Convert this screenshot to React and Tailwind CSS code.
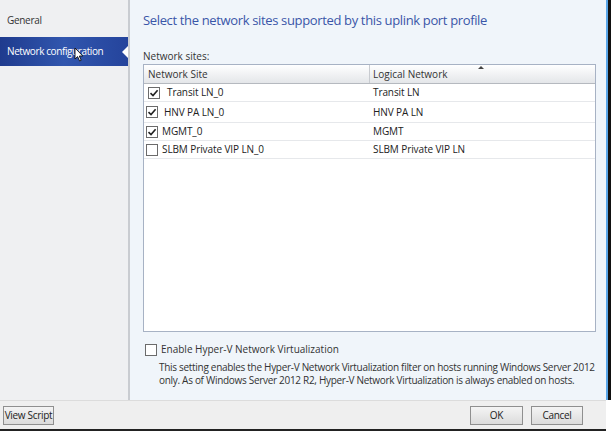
import React from 'react';

const rows = [
  { site: 'Transit LN_0', net: 'Transit LN', checked: true, pad: 'pl-[4px]', gap: 'gap-[7px]' },
  { site: 'HNV PA LN_0', net: 'HNV PA LN', checked: true, pad: 'pl-[2px]', gap: 'gap-[6px]' },
  { site: 'MGMT_0', net: 'MGMT', checked: true, pad: 'pl-[2px]', gap: 'gap-[4px]' },
  { site: 'SLBM Private VIP LN_0', net: 'SLBM Private VIP LN', checked: false, pad: 'pl-[2px]', gap: 'gap-[4px]' },
];

const Checkbox = ({ checked }) => (
  <span className="w-[12px] h-[12px] border border-[#6b6b6b] bg-white flex items-center justify-center shrink-0">
    {checked && (
      <svg width="10" height="10" viewBox="0 0 10 10">
        <path d="M1.5 5.2 L4 7.6 L8.6 2.2" fill="none" stroke="#222" strokeWidth="1.6" />
      </svg>
    )}
  </span>
);

const Button = ({ children, className = '' }) => (
  <button className={`h-[19px] border border-[#8f8f8f] bg-gradient-to-b from-[#f4f4f4] to-[#dcdcdc] text-[10px] tracking-[-0.3px] whitespace-nowrap text-[#222] ${className}`}>
    {children}
  </button>
);

export default function App() {
  return (
    <div className="w-[611px] h-[437px] bg-white text-[#222] font-['Open_Sans','Noto_Sans',sans-serif] overflow-hidden">
      <div className="flex h-[400px]">
        {/* Sidebar */}
        <div className="w-[128px] bg-[#eff0f2] flex flex-col pt-[10px]">
          <div className="h-[20px] pl-[7px] text-[10px] tracking-[-0.3px] text-[#333] flex items-center">General</div>
          <div className="relative mt-[7px] h-[29px] pl-[7px] flex items-center text-[10px] tracking-[-0.4px] text-white bg-gradient-to-r from-[#1f3b8e] via-[#3156ae] to-[#25449c]">
            Network configuration
            <span className="absolute right-0 top-[9px] w-0 h-0 border-y-[6px] border-y-transparent border-r-[6px] border-r-white" />
            <svg className="absolute left-[74px] top-[10px]" width="10" height="15" viewBox="0 0 10 15">
              <path d="M1 1 L1 12 L3.6 9.6 L5.6 14 L7.2 13.3 L5.3 9 L8.8 9 Z" fill="white" stroke="#111" strokeWidth="0.9" />
            </svg>
          </div>
        </div>
        <div className="w-[2px] bg-[#c9ccd1]" />

        {/* Main panel */}
        <div className="flex-1 bg-[#f0f5fa] pl-[13px] pr-[10px] pt-[10px] flex flex-col">
          <h1 className="text-[13px] tracking-[-0.35px] text-[#3a56a8] leading-[20px]">Select the network sites supported by this uplink port profile</h1>
          <div className="mt-[19px] text-[10px] leading-[14px] text-[#333]">Network sites:</div>

          <div className="mt-[1px] h-[268px] border border-[#a7b2c4] bg-white flex flex-col">
            <div className="relative h-[19px] flex text-[10px] text-[#333] bg-gradient-to-b from-white to-[#e4e6e9] border-b border-[#b5b9bf]">
              <div className="w-[226px] pl-[4px] flex items-center border-r border-[#c8cbd0]">Network Site</div>
              <div className="flex-1 pl-[3px] flex items-center">Logical Network</div>
              <span className="absolute left-[334px] top-[1px] w-0 h-0 border-x-[3px] border-x-transparent border-b-[3px] border-b-[#444]" />
            </div>
            {rows.map((r, i) => (
              <div key={r.site} className={`flex text-[10px] tracking-[-0.1px] text-[#222] border-b border-[#e6e8eb] ${i === 1 ? 'h-[21px]' : 'h-[18px]'}`}>
                <div className={`w-[226px] ${r.pad} ${r.gap} flex items-center`}>
                  <Checkbox checked={r.checked} />
                  <span>{r.site}</span>
                </div>
                <div className="flex-1 pl-[3px] flex items-center">{r.net}</div>
              </div>
            ))}
          </div>

          <div className="mt-[10px] pl-[2px] flex items-center gap-[4px] text-[10px] text-[#333]">
            <Checkbox checked={false} />
            <span>Enable Hyper-V Network Virtualization</span>
          </div>
          <p className="mt-[4px] pl-[16px] -mr-[8px] text-[10px] tracking-[-0.3px] leading-[13px] text-[#333]">
            This setting enables the Hyper-V Network Virtualization filter on hosts running Windows Server 2012 only. As of Windows Server 2012 R2, Hyper-V Network Virtualization is always enabled on hosts.
          </p>
        </div>
        <div className="w-[2px] bg-[#5aa6e8]" />
        <div className="w-[3px] bg-[#111]" />
      </div>

      {/* Footer */}
      <div className="h-[31px] bg-[#efefef] border-t border-[#dcdcdc] border-b-2 border-b-[#222] flex items-center px-[3px] mr-[5px]">
        <Button className="w-[51px]">View Script</Button>
        <div className="flex-1" />
        <Button className="w-[53px] border-[#4a9be0]">OK</Button>
        <Button className="w-[52px] ml-[8px] mr-[20px]">Cancel</Button>
      </div>
    </div>
  );
}
